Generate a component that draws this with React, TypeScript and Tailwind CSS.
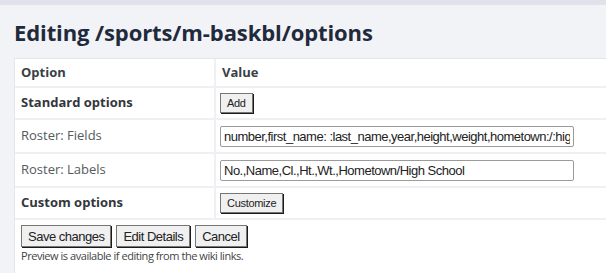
export default function App() {
  const rows = [
    { label: "Standard options", bold: true, kind: "button", text: "Add", h: "h-[32px]" },
    { label: "Roster: Fields", bold: false, kind: "input", text: "number,first_name: :last_name,year,height,weight,hometown:/:high_school", h: "h-[34px]" },
    { label: "Roster: Labels", bold: false, kind: "input", text: "No.,Name,Cl.,Ht.,Wt.,Hometown/High School", h: "h-[34px]" },
    { label: "Custom options", bold: true, kind: "button", text: "Customize", h: "h-[32px]" },
  ];

  const btn =
    "bg-[#f0f0f0] border border-[#767676] shadow-[1px_1px_0_#1a1a1a] text-[#222] font-['Liberation_Sans',Arial,sans-serif] leading-none";

  return (
    <div className="min-h-screen bg-[#f2f3f7] font-['Open_Sans',sans-serif]">
      <div className="h-[5px] bg-[#dfe2ea]" />
      <div className="pl-[14px]">
        <h1 className="pt-[12px] pb-[11px] text-[22px] font-bold leading-[30px] text-[#1f2a3c] tracking-[-0.1px]">
          Editing /sports/m-baskbl/options
        </h1>
        <div className="bg-white border-t border-l border-[#e3e6ec] pb-[14px]">
          <table className="w-full border-collapse text-[13px]">
            <tbody>
              <tr className="h-[28px] border-b-2 border-[#eef0f4]">
                <th className="w-[200px] text-left font-bold text-[#3a3f47] pl-[6px] border-r-2 border-[#eef0f4]">Option</th>
                <th className="text-left font-bold text-[#3a3f47] pl-[6px]">Value</th>
              </tr>
              {rows.map((r) => (
                <tr key={r.label} className={`${r.h} border-b-2 border-[#eef0f4]`}>
                  <td
                    className={`pl-[6px] border-r-2 border-[#eef0f4] ${
                      r.bold ? "font-bold text-[#33373d]" : "text-[#555a60]"
                    }`}
                  >
                    {r.label}
                  </td>
                  <td className="pl-[4px]">
                    {r.kind === "input" ? (
                      <input
                        readOnly
                        value={r.text}
                        className="block w-[354px] h-[21px] px-[3px] border border-[#9a9a9a] rounded-[2px] text-[13px] tracking-[-0.5px] text-[#222] font-['Liberation_Sans',Arial,sans-serif] outline-none"
                      />
                    ) : (
                      <button className={`${btn} h-[20px] px-[6px] text-[11px] tracking-[-0.3px]`}>{r.text}</button>
                    )}
                  </td>
                </tr>
              ))}
            </tbody>
          </table>
          <div className="pl-[6px] pt-[5px]">
            <div className="flex gap-[5px]">
              <button className={`${btn} h-[22px] px-[6px] text-[13px] tracking-[-0.5px]`}>Save changes</button>
              <button className={`${btn} h-[22px] px-[6px] text-[13px] tracking-[-0.5px]`}>Edit Details</button>
              <button className={`${btn} h-[22px] px-[6px] text-[13px] tracking-[-0.5px]`}>Cancel</button>
            </div>
            <p className="mt-[2px] text-[11px] leading-[14px] tracking-[-0.45px] text-[#444]">
              Preview is available if editing from the wiki links.
            </p>
          </div>
        </div>
      </div>
    </div>
  );
}
